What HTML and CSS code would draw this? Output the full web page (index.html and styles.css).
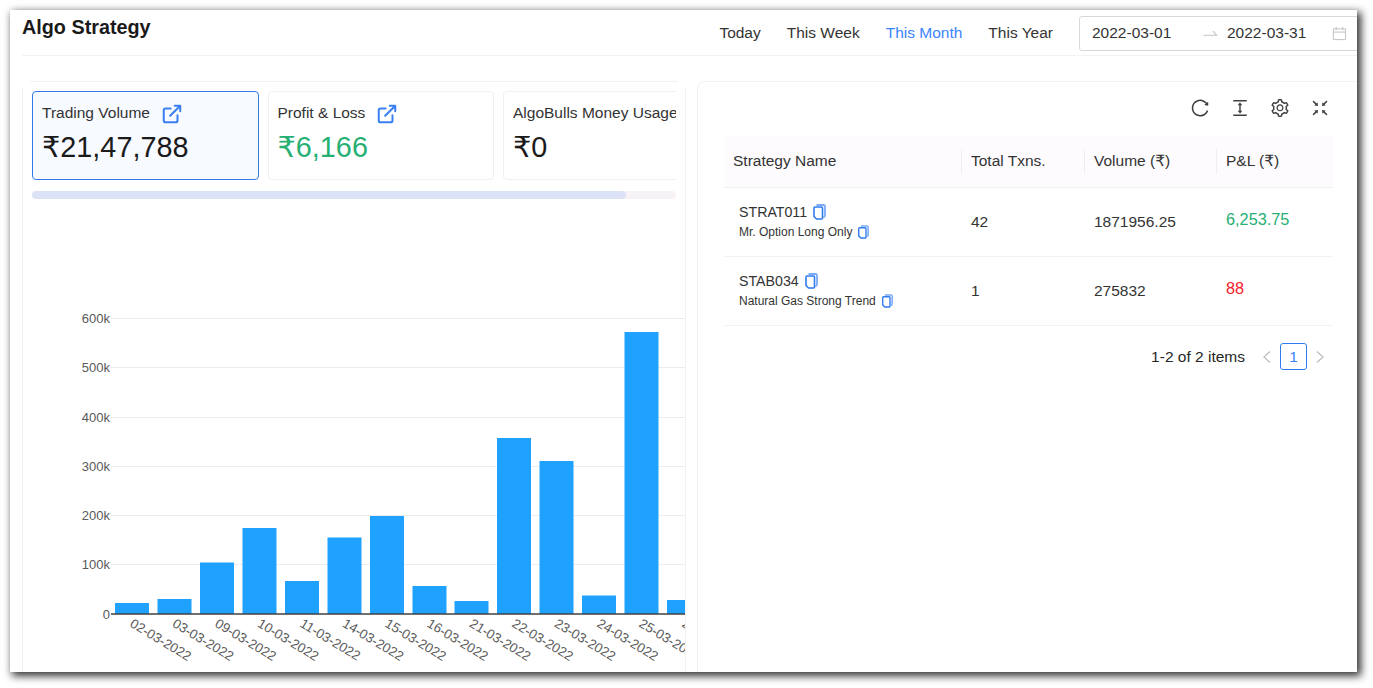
FILE: index.html
```html
<!DOCTYPE html>
<html lang="en">
<head>
    <meta charset="UTF-8">
    <meta name="viewport" content="width=device-width, initial-scale=1.0">
    <title>Algo Strategy</title>
    <link rel="stylesheet" href="styles.css">
</head>
<body>

<svg class="sprites" width="0" height="0">
    <symbol id="copy" viewBox="0 0 14 16">
        <path d="M4.500 1h7A1.500 1.500 0 0 1 13 2.500v9a1.500 1.500 0 0 1-1.500 1.500" fill="none" stroke="#7aaaf8" stroke-width="1.800"/>
        <path d="M3 3h6.500a1 1 0 0 1 1 1v10a1 1 0 0 1-1 1H4.500L2 12.500V4a1 1 0 0 1 1-1z" fill="none" stroke="#2f7bf0" stroke-width="1.600"/>
    </symbol>
    <symbol id="external" viewBox="0 0 24 24">
        <path d="M18 13.500V19a2 2 0 0 1-2 2H5a2 2 0 0 1-2-2V8a2 2 0 0 1 2-2h5.500M15 3h6v6M10 14 21 3" fill="none" stroke="#3a80f2" stroke-width="2.200" stroke-linecap="round" stroke-linejoin="round"/>
    </symbol>
</svg>

<div class="window">
    <header class="top-bar">
        <h1>Algo Strategy</h1>
        <nav class="ranges">
            <a href="#">Today</a>
            <a href="#">This Week</a>
            <a href="#" class="active">This Month</a>
            <a href="#">This Year</a>
        </nav>
        <div class="date-picker">
            <span class="date-from">2022-03-01</span>
            <svg class="swap" viewBox="64 64 896 896"><path d="M873.1 596.2l-164-208A32 32 0 0 0 684 376h-64.800c-6.700 0-10.400 7.700-6.300 13l144.300 183H152c-4.400 0-8 3.600-8 8v60c0 4.400 3.600 8 8 8h695.900c26.800 0 41.700-30.800 25.200-51.800z"/></svg>
            <span class="date-to">2022-03-31</span>
            <svg class="calendar" viewBox="0 0 16 16"><path d="M1.500 3h13v11.500h-13zM1.500 6.500h13M4.500 1v3.500M11.500 1v3.500" fill="none" stroke="#bfbfbf"/></svg>
        </div>
    </header>

    <main class="content">
        <section class="panel chart-panel">
            <div class="stat-cards">
                <div class="stat-card selected">
                    <div class="stat-title">Trading Volume <svg class="ext-icon"><use href="#external"/></svg></div>
                    <div class="stat-value"><span class="rupee">₹</span>21,47,788</div>
                </div>
                <div class="stat-card">
                    <div class="stat-title">Profit &amp; Loss <svg class="ext-icon"><use href="#external"/></svg></div>
                    <div class="stat-value positive"><span class="rupee">₹</span>6,166</div>
                </div>
                <div class="stat-card">
                    <div class="stat-title">AlgoBulls Money Usage</div>
                    <div class="stat-value"><span class="rupee">₹</span>0</div>
                </div>
            </div>
            <div class="scroll-track"><div class="scroll-thumb"></div></div>

            <svg class="chart" width="662" height="473" viewBox="23 199 662 473">
                <g class="grid">
                    <line x1="111" x2="685" y1="318.500" y2="318.500"/>
                    <line x1="111" x2="685" y1="367.500" y2="367.500"/>
                    <line x1="111" x2="685" y1="417.500" y2="417.500"/>
                    <line x1="111" x2="685" y1="466.500" y2="466.500"/>
                    <line x1="111" x2="685" y1="515.500" y2="515.500"/>
                    <line x1="111" x2="685" y1="564.500" y2="564.500"/>
                </g>
                <g class="y-labels">
                    <text x="110" y="323">600k</text>
                    <text x="110" y="372">500k</text>
                    <text x="110" y="422">400k</text>
                    <text x="110" y="471">300k</text>
                    <text x="110" y="520">200k</text>
                    <text x="110" y="569">100k</text>
                    <text x="110" y="619">0</text>
                </g>
                <g class="bars">
                    <rect x="115" y="603" width="34" height="11"/>
                    <rect x="157.500" y="599" width="34" height="15"/>
                    <rect x="200" y="562.500" width="34" height="51.500"/>
                    <rect x="242.500" y="528" width="34" height="86"/>
                    <rect x="285" y="581" width="34" height="33"/>
                    <rect x="327.500" y="537.500" width="34" height="76.500"/>
                    <rect x="370" y="516" width="34" height="98"/>
                    <rect x="412.500" y="586" width="34" height="28"/>
                    <rect x="454.500" y="601" width="34" height="13"/>
                    <rect x="497" y="438" width="34" height="176"/>
                    <rect x="539.500" y="461" width="34" height="153"/>
                    <rect x="582" y="595.500" width="34" height="18.500"/>
                    <rect x="624.500" y="332" width="34" height="282"/>
                    <rect x="667" y="600" width="34" height="14"/>
                </g>
                <line class="axis" x1="111" x2="685" y1="614" y2="614"/>
                <g class="x-labels">
                    <text transform="translate(129 626) rotate(31)">02-03-2022</text>
                    <text transform="translate(171.500 626) rotate(31)">03-03-2022</text>
                    <text transform="translate(214 626) rotate(31)">09-03-2022</text>
                    <text transform="translate(256.500 626) rotate(31)">10-03-2022</text>
                    <text transform="translate(299 626) rotate(31)">11-03-2022</text>
                    <text transform="translate(341.500 626) rotate(31)">14-03-2022</text>
                    <text transform="translate(384 626) rotate(31)">15-03-2022</text>
                    <text transform="translate(426 626) rotate(31)">16-03-2022</text>
                    <text transform="translate(468.500 626) rotate(31)">21-03-2022</text>
                    <text transform="translate(511 626) rotate(31)">22-03-2022</text>
                    <text transform="translate(553.500 626) rotate(31)">23-03-2022</text>
                    <text transform="translate(596 626) rotate(31)">24-03-2022</text>
                    <text transform="translate(638 626) rotate(31)">25-03-2022</text>
                    <text transform="translate(681 626) rotate(31)">28-03-2022</text>
                </g>
            </svg>
        </section>

        <section class="panel table-panel">
            <div class="toolbar">
                <svg class="tool" viewBox="64 64 896 896"><path d="M909.100 209.300l-56.400 44.100C775.800 155.100 656.200 92 521.900 92 290 92 102.300 279.500 102 511.500 101.700 743.700 289.800 932 521.900 932c181.300 0 335.800-115 394.600-276.100 1.500-4.200-.7-8.900-4.900-10.300l-56.700-19.500a8 8 0 0 0-10.100 4.800c-1.800 5-3.800 10-5.900 14.900-17.300 41-42.100 77.800-73.700 109.400A344.770 344.770 0 0 1 655.900 829c-42.300 17.900-87.400 27-133.800 27-46.500 0-91.500-9.100-133.800-27A341.500 341.500 0 0 1 279 755.200a342.160 342.160 0 0 1-73.700-109.400c-17.900-42.400-27-87.400-27-133.900s9.100-91.500 27-133.900c17.300-41 42.100-77.800 73.700-109.400 31.600-31.600 68.400-56.400 109.300-73.800 42.300-17.900 87.400-27 133.800-27 46.500 0 91.500 9.100 133.800 27a341.500 341.500 0 0 1 109.300 73.800c9.900 9.900 19.200 20.400 27.800 31.400l-60.200 47a8 8 0 0 0 3 14.100l175.600 43c5 1.200 9.900-2.600 9.900-7.700l.8-180.900c-.1-6.600-7.800-10.300-13-6.200z"/></svg>
                <svg class="tool" viewBox="64 64 896 896"><path d="M840 836H184c-4.400 0-8 3.600-8 8v60c0 4.400 3.600 8 8 8h656c4.400 0 8-3.600 8-8v-60c0-4.400-3.600-8-8-8zm0-724H184c-4.400 0-8 3.600-8 8v60c0 4.400 3.600 8 8 8h656c4.400 0 8-3.600 8-8v-60c0-4.400-3.600-8-8-8zM610.800 378c6 0 9.400-7 5.700-11.700L515.700 238.700a7.140 7.140 0 0 0-11.300 0L403.600 366.300a7.230 7.230 0 0 0 5.700 11.700H476v268h-62.800c-6 0-9.400 7-5.700 11.700l100.800 127.500c2.900 3.700 8.500 3.700 11.300 0l100.800-127.500c3.700-4.700.4-11.700-5.700-11.700H548V378h62.800z"/></svg>
                <svg class="tool" viewBox="64 64 896 896"><path d="M924.800 625.700l-65.500-56c3.100-19 4.700-38.400 4.700-57.800s-1.600-38.800-4.700-57.800l65.500-56a32.030 32.030 0 0 0 9.300-35.200l-.9-2.600a443.740 443.740 0 0 0-79.700-137.900l-1.800-2.100a32.120 32.120 0 0 0-35.100-9.500l-81.300 28.900c-30-24.600-63.500-44-99.700-57.600l-15.700-85a32.050 32.050 0 0 0-25.800-25.700l-2.700-.5c-52.100-9.400-106.900-9.400-159 0l-2.700.5a32.050 32.050 0 0 0-25.800 25.700l-15.800 85.400a351.860 351.860 0 0 0-99 57.400l-81.900-29.100a32 32 0 0 0-35.100 9.500l-1.800 2.100a446.020 446.020 0 0 0-79.700 137.900l-.9 2.600c-4.500 12.500-.8 26.500 9.300 35.200l66.300 56.600c-3.100 18.800-4.600 38-4.600 57.100 0 19.200 1.500 38.400 4.600 57.100L99 625.500a32.030 32.030 0 0 0-9.300 35.200l.9 2.600c18.100 50.400 44.900 96.900 79.700 137.900l1.800 2.100a32.120 32.120 0 0 0 35.100 9.500l81.900-29.100c29.800 24.500 63.100 43.900 99 57.400l15.800 85.400a32.050 32.050 0 0 0 25.800 25.700l2.700.5a449.400 449.400 0 0 0 159 0l2.700-.5a32.050 32.050 0 0 0 25.800-25.700l15.700-85a350 350 0 0 0 99.700-57.600l81.300 28.900a32 32 0 0 0 35.100-9.500l1.800-2.100c34.800-41.100 61.600-87.500 79.700-137.900l.9-2.600c4.500-12.300.8-26.300-9.300-35zM788.300 465.900c2.500 15.100 3.800 30.600 3.800 46.100s-1.300 31-3.800 46.100l-6.600 40.100 74.700 63.900a370.030 370.030 0 0 1-42.600 73.600L721 702.800l-31.400 25.800c-23.900 19.600-50.500 35-79.300 45.800l-38.100 14.300-17.900 97a377.500 377.500 0 0 1-85 0l-17.900-97.200-37.800-14.500c-28.500-10.800-55-26.200-78.700-45.700l-31.400-25.900-93.400 33.200c-17-22.900-31.200-47.600-42.600-73.600l75.500-64.500-6.500-40c-2.400-14.900-3.700-30.300-3.700-45.500 0-15.300 1.200-30.600 3.700-45.500l6.500-40-75.500-64.500c11.300-26.100 25.600-50.700 42.600-73.600l93.400 33.200 31.400-25.900c23.700-19.500 50.200-34.900 78.700-45.700l37.900-14.300 17.900-97.200c28.100-3.200 56.800-3.200 85 0l17.900 97 38.100 14.300c28.700 10.800 55.400 26.200 79.300 45.800l31.400 25.800 92.800-32.900c17 22.900 31.200 47.600 42.600 73.600L781.800 426l6.500 39.900zM512 326c-97.200 0-176 78.800-176 176s78.800 176 176 176 176-78.800 176-176-78.800-176-176-176zm79.200 255.200A111.600 111.600 0 0 1 512 614c-29.900 0-58-11.700-79.200-32.800A111.600 111.600 0 0 1 400 502c0-29.900 11.700-58 32.800-79.200C454 401.600 482.100 390 512 390c29.900 0 58 11.600 79.200 32.800A111.600 111.600 0 0 1 624 502c0 29.900-11.700 58-32.800 79.200z"/></svg>
                <svg class="tool" viewBox="64 64 896 896"><path d="M391 240.900c-.8-6.600-8.900-9.400-13.600-4.700l-43.700 43.700L200 146.300a8.030 8.030 0 0 0-11.300 0l-42.400 42.300a8.030 8.030 0 0 0 0 11.300L280 333.600l-43.900 43.900a8.010 8.010 0 0 0 4.700 13.600L401 410c5.100.6 9.500-3.700 8.900-8.900L391 240.900zm10.100 373.200L240.800 633c-6.600.8-9.400 8.900-4.700 13.600l43.900 43.900L146.300 824a8.030 8.030 0 0 0 0 11.300l42.400 42.300c3.100 3.100 8.200 3.100 11.300 0L333.700 744l43.700 43.700A8.010 8.010 0 0 0 391 783l18.900-160.100c.6-5.100-3.700-9.400-8.800-8.800zm221.800-204.200L783.200 391c6.600-.8 9.400-8.900 4.700-13.600L744 333.600 877.700 200c3.100-3.100 3.100-8.200 0-11.300l-42.400-42.300a8.030 8.030 0 0 0-11.300 0L690.300 279.900l-43.700-43.700a8.010 8.010 0 0 0-13.600 4.700L614.100 401c-.6 5.200 3.700 9.500 8.800 8.900zM744 690.400l43.900-43.900a8.010 8.010 0 0 0-4.700-13.600L623 614c-5.100-.6-9.500 3.700-8.900 8.900L633 783.100c.8 6.600 8.900 9.400 13.600 4.700l43.700-43.700L824 877.700c3.100 3.100 8.200 3.100 11.300 0l42.400-42.300c3.100-3.100 3.100-8.200 0-11.300L744 690.400z"/></svg>
            </div>

            <table class="strategies">
                <thead>
                    <tr>
                        <th class="col-name">Strategy Name</th>
                        <th class="col-txns">Total Txns.</th>
                        <th class="col-volume">Volume (<span class="rupee">₹</span>)</th>
                        <th class="col-pnl">P&amp;L (<span class="rupee">₹</span>)</th>
                    </tr>
                </thead>
                <tbody>
                    <tr>
                        <td>
                            <div class="strategy-code">STRAT011 <svg class="copy-lg"><use href="#copy"/></svg></div>
                            <div class="strategy-name">Mr. Option Long Only <svg class="copy-sm"><use href="#copy"/></svg></div>
                        </td>
                        <td>42</td>
                        <td>1871956.25</td>
                        <td class="pnl positive">6,253.75</td>
                    </tr>
                    <tr>
                        <td>
                            <div class="strategy-code">STAB034 <svg class="copy-lg"><use href="#copy"/></svg></div>
                            <div class="strategy-name">Natural Gas Strong Trend <svg class="copy-sm"><use href="#copy"/></svg></div>
                        </td>
                        <td>1</td>
                        <td>275832</td>
                        <td class="pnl negative">88</td>
                    </tr>
                </tbody>
            </table>

            <div class="pagination">
                <span class="total">1-2 of 2 items</span>
                <svg class="chevron" viewBox="0 0 10 12"><path d="M8 .5 2 6l6 5.500" fill="none" stroke="#bfbfbf" stroke-width="1.300"/></svg>
                <span class="page">1</span>
                <svg class="chevron" viewBox="0 0 10 12"><path d="M2 .5 8 6l-6 5.500" fill="none" stroke="#bfbfbf" stroke-width="1.300"/></svg>
            </div>
        </section>
    </main>
</div>

</body>
</html>
```

FILE: styles.css
```css
html, body {
    margin: 0;
    padding: 0;
    height: 100%;
    overflow: hidden;
    background-color: white;
}
body {
    font-family: "Liberation Sans", Arial, sans-serif;
    color: #262626;
}
.sprites {
    display: block;
    height: 0;
}
.rupee {
    font-family: "DejaVu Sans", sans-serif;
}
.window {
    width: 1347px;
    height: 662px;
    margin: 10px 0 0 10px;
    background-color: white;
    box-shadow: 3px 3px 8px 1px rgba(0, 0, 0, 0.8);
    overflow: hidden;
}

/* header */
.top-bar {
    display: flex;
    align-items: flex-start;
    height: 45px;
    margin-left: 12px;
    width: 1335px;
    border-bottom: 1px solid #f2f2f2;
}
h1 {
    margin: 5px 0 0;
    font-size: 19.8px;
    line-height: 25px;
    font-weight: bold;
    color: #1a1a1a;
    flex: 1;
}
.ranges {
    display: flex;
    gap: 26px;
    margin: 14px 26px 0 0;
}
.ranges a {
    font-size: 15.5px;
    line-height: 18px;
    color: #333;
    text-decoration: none;
}
.ranges a.active {
    color: #3a85ff;
}
.date-picker {
    display: flex;
    align-items: center;
    box-sizing: border-box;
    flex: none;
    width: 286px;
    height: 35px;
    margin: 6px -8px 0 0;
    padding: 0 0 1px 12px;
    border: 1px solid #d9d9d9;
    border-radius: 3px;
    font-size: 15.5px;
    color: #333;
}
.date-from {
    width: 110px;
}
.swap {
    width: 17px;
    height: 17px;
    fill: #d0d0d0;
    margin-right: 8px;
}
.date-to {
    width: 105px;
}
.calendar {
    width: 15px;
    height: 15px;
}

/* panels */
.content {
    display: flex;
    gap: 11px;
    margin: 25px 0 0 12px;
}
.panel {
    box-sizing: border-box;
    height: 640px;
    flex: none;
    overflow: hidden;
}
/* the left panel's corners show no arc, only the straight edges */
.chart-panel {
    width: 664px;
    padding-top: 10px;
    background:
        linear-gradient(#f2f2f2, #f2f2f2) 8px 0 / 648px 1px no-repeat,
        linear-gradient(#f2f2f2, #f2f2f2) 0 7px / 1px 100% no-repeat,
        linear-gradient(#f2f2f2, #f2f2f2) 663px 7px / 1px 100% no-repeat;
}
.table-panel {
    width: 680px;
    padding: 0 0 0 26px;
    border: 1px solid #f2f2f2;
    border-radius: 8px;
}
.stat-cards {
    display: flex;
    gap: 9px;
    margin-left: 10px;
    width: 644px;
    height: 89px;
    overflow: hidden;
}
.stat-card {
    box-sizing: border-box;
    flex: none;
    width: 226.5px;
    height: 89px;
    padding: 10px 9px;
    border: 1px solid #f0f0f0;
    border-radius: 4px;
}
.stat-card.selected {
    background-color: #f7faff;
    border-color: #3379e8;
}
.stat-title {
    display: flex;
    align-items: center;
    gap: 11px;
    height: 22px;
    font-size: 15.5px;
    color: #333;
    white-space: nowrap;
}
.ext-icon {
    width: 22px;
    height: 22px;
    margin-top: 2px;
}
.stat-value {
    margin-top: 4px;
    font-size: 28.8px;
    line-height: 38px;
    color: #1a1a1a;
}
.stat-value.positive {
    color: #27b073;
}
.scroll-track {
    width: 644px;
    height: 8px;
    margin: 11px 0 0 10px;
    border-radius: 4px;
    background-color: #f6f2f6;
}
.scroll-thumb {
    width: 594px;
    height: 8px;
    border-radius: 4px;
    background-color: #dde3f6;
}

/* chart */
.chart {
    display: block;
    margin-left: 1px;
    font-family: "Liberation Sans", Arial, sans-serif;
    font-size: 13px;
    fill: #595959;
}
.x-labels {
    font-size: 13.4px;
}
.grid line {
    stroke: #ececec;
}
.y-labels text {
    text-anchor: end;
}
.bars rect {
    fill: #1fa1ff;
}
.axis {
    stroke: #404040;
    stroke-width: 1.500;
}

/* table */
.toolbar {
    display: flex;
    justify-content: flex-end;
    gap: 22px;
    width: 605px;
    height: 54px;
    padding-top: 17px;
    box-sizing: border-box;
}
.tool {
    width: 18px;
    height: 18px;
    fill: #404040;
}
.strategies {
    table-layout: fixed;
    border-collapse: collapse;
    width: 609px;
    font-size: 15.5px;
}
.strategies th {
    position: relative;
    height: 51px;
    padding: 0 9px;
    box-sizing: border-box;
    background-color: #fdfbfe;
    border-bottom: 1px solid #f2f2f2;
    text-align: left;
    font-weight: normal;
    color: #333;
}
/* little divider between header cells */
.strategies th + th::before {
    content: "";
    position: absolute;
    left: -1px;
    top: 13px;
    height: 25px;
    width: 1px;
    background-color: #efefef;
}
.col-name {
    width: 238px;
}
.col-txns {
    width: 123px;
}
.col-volume {
    width: 132px;
}
.col-pnl {
    width: 116px;
}
.strategies td {
    height: 69px;
    box-sizing: border-box;
    padding: 0 9px;
    border-bottom: 1px solid #f2f2f2;
    color: #333;
}
.strategies td:first-child {
    padding-left: 15px;
}
.strategies td.pnl {
    padding-bottom: 4px;
    font-size: 16.3px;
}
.strategies td.positive {
    color: #27b073;
}
.strategies td.negative {
    color: #f5222d;
}
.strategy-code {
    display: flex;
    align-items: center;
    gap: 5px;
    font-size: 14.2px;
    line-height: 20px;
}
.strategy-name {
    display: flex;
    align-items: center;
    gap: 5px;
    font-size: 12px;
    line-height: 20px;
}
.copy-lg {
    width: 14px;
    height: 16px;
}
.copy-sm {
    width: 12px;
    height: 14px;
}

/* pagination */
.pagination {
    display: flex;
    align-items: center;
    width: 601px;
    height: 28px;
    margin-top: 17px;
    justify-content: flex-end;
    font-size: 15.5px;
}
.total {
    margin-right: 17px;
}
.chevron {
    width: 10px;
    height: 12px;
}
.page {
    box-sizing: border-box;
    width: 27px;
    height: 27px;
    margin: 0 8px;
    border: 1px solid #2f7bf0;
    border-radius: 3px;
    color: #3a85ff;
    text-align: center;
    line-height: 25px;
}
```
